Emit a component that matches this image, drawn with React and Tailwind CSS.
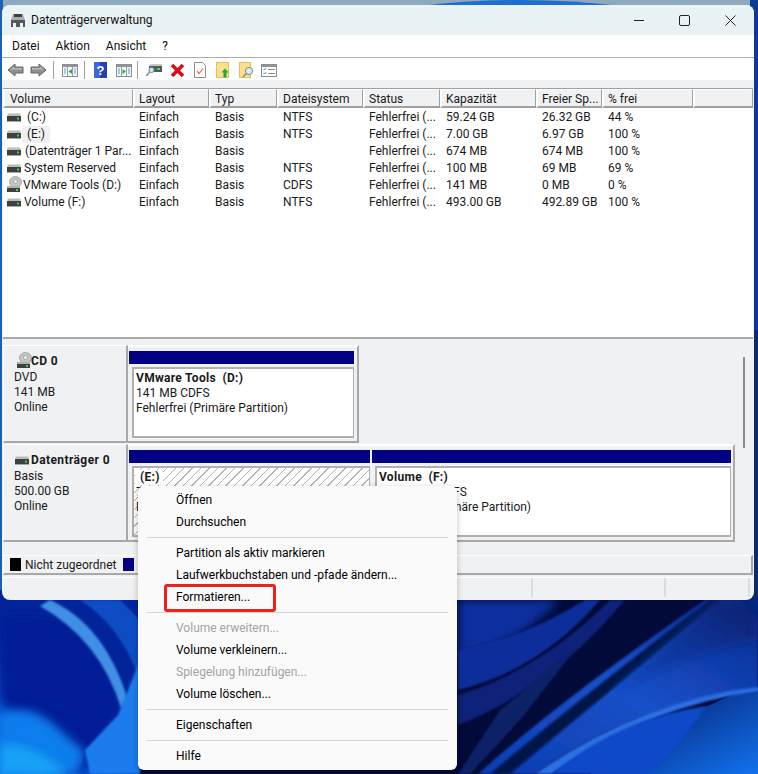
const volumes = [
  { name: '(C:)', pad: 'pl-[6px]', layout: 'Einfach', typ: 'Basis', fs: 'NTFS', status: 'Fehlerfrei (...', cap: '59.24 GB', free: '26.32 GB', pct: '44 %' },
  { name: '(E:)', pad: 'pl-[6px]', sel: true, layout: 'Einfach', typ: 'Basis', fs: 'NTFS', status: 'Fehlerfrei (...', cap: '7.00 GB', free: '6.97 GB', pct: '100 %' },
  { name: '(Datenträger 1 Par...', pad: 'pl-[4px]', layout: 'Einfach', typ: 'Basis', fs: '', status: 'Fehlerfrei (...', cap: '674 MB', free: '674 MB', pct: '100 %' },
  { name: 'System Reserved', pad: 'pl-[3px]', layout: 'Einfach', typ: 'Basis', fs: 'NTFS', status: 'Fehlerfrei (...', cap: '100 MB', free: '69 MB', pct: '69 %' },
  { name: 'VMware Tools (D:)', pad: 'pl-[3px]', cd: true, layout: 'Einfach', typ: 'Basis', fs: 'CDFS', status: 'Fehlerfrei (...', cap: '141 MB', free: '0 MB', pct: '0 %' },
  { name: 'Volume (F:)', pad: 'pl-[3px]', layout: 'Einfach', typ: 'Basis', fs: 'NTFS', status: 'Fehlerfrei (...', cap: '493.00 GB', free: '492.89 GB', pct: '100 %' },
];

const columns = ['Volume', 'Layout', 'Typ', 'Dateisystem', 'Status', 'Kapazität', 'Freier Sp...', '% frei', ''];
const gridCols = 'grid grid-cols-[130px_76px_68px_86px_77px_96px_66px_91px_1fr]';

const menu = [
  ['Öffnen', 'Durchsuchen'],
  ['Partition als aktiv markieren', 'Laufwerkbuchstaben und -pfade ändern...', 'Formatieren...'],
  ['Volume erweitern...', 'Volume verkleinern...', 'Spiegelung hinzufügen...', 'Volume löschen...'],
  ['Eigenschaften'],
  ['Hilfe'],
];
const disabled = ['Volume erweitern...', 'Spiegelung hinzufügen...'];

const Wallpaper = () => (
  <svg className="absolute inset-0" width="758" height="774" viewBox="0 0 758 774">
    <defs>
      <filter id="soft" x="-20%" y="-20%" width="140%" height="140%"><feGaussianBlur stdDeviation="5" /></filter>
      <filter id="soft2" x="-20%" y="-20%" width="140%" height="140%"><feGaussianBlur stdDeviation="1.2" /></filter>
      <radialGradient id="glow" cx="0.25" cy="1" r="0.75">
        <stop offset="0" stopColor="#17a0f5" />
        <stop offset="0.5" stopColor="#0a60dc" />
        <stop offset="1" stopColor="#02249a" />
      </radialGradient>
      <linearGradient id="band" x1="0" y1="1" x2="1" y2="0">
        <stop offset="0" stopColor="#0d3cb0" />
        <stop offset="0.5" stopColor="#1750c8" />
        <stop offset="1" stopColor="#0a2a90" />
      </linearGradient>
      <linearGradient id="band2" x1="0" y1="1" x2="1" y2="0">
        <stop offset="0" stopColor="#0d49c4" />
        <stop offset="1" stopColor="#062070" />
      </linearGradient>
      <linearGradient id="corner" x1="0" y1="0" x2="1" y2="1">
        <stop offset="0" stopColor="#020f5c" />
        <stop offset="1" stopColor="#1272ec" />
      </linearGradient>
    </defs>
    <rect width="758" height="774" fill="#010a38" />
    <rect width="758" height="12" fill="#8fa9bf" />
    <path d="M420 6 Q520 -6 622 6 L622 12 L420 12 Z" fill="#1c6ed0" />
    <rect x="0" y="0" width="3" height="600" fill="#1a5fb8" />
    <rect x="750" y="0" width="8" height="330" fill="#0d3a90" />
    <rect x="750" y="330" width="8" height="280" fill="#0a2a6e" />

    {/* bottom left swirl */}
    <rect x="0" y="590" width="140" height="184" fill="url(#glow)" />
    <path d="M0 618 Q70 605 105 660 Q130 700 115 725 L85 774 L60 774 L0 700 Z" fill="#021f96" filter="url(#soft)" />
    <path d="M0 715 Q30 700 60 730 L85 752 L78 774 L0 774 Z" fill="#0f7cec" filter="url(#soft)" />
    <path d="M0 745 Q30 740 70 774 L0 774 Z" fill="#19a2f7" filter="url(#soft)" />
    <path d="M50 600 Q105 625 128 700 L121 708 Q100 640 40 606 Z" fill="#3f8fe4" filter="url(#soft2)" />
    <path d="M80 600 Q120 625 140 680 L140 620 L120 600 Z" fill="#0c4ec4" filter="url(#soft2)" />
    <path d="M85 750 L118 715 L140 660 L140 774 L90 774 Z" fill="#1b7cee" filter="url(#soft2)" />

    {/* bottom right ribbons */}
    <path d="M458 600 L560 600 Q510 650 458 655 Z" fill="#0a2f9e" filter="url(#soft)" />
    <path d="M458 650 Q520 640 585 600 L600 600 Q540 670 458 690 Z" fill="#0b2f9a" filter="url(#soft2)" />
    <path d="M458 695 Q540 670 610 600 L625 600 Q550 690 458 725 Z" fill="#082478" filter="url(#soft2)" />
    <path d="M458 774 L500 710 L575 650 L520 720 L470 774 Z" fill="#0a2266" filter="url(#soft2)" />
    <path d="M478 774 Q560 700 705 600 L758 600 L758 690 Q640 700 535 774 Z" fill="url(#band)" filter="url(#soft2)" />
    <path d="M490 774 Q590 690 710 600 L722 600 Q610 690 510 774 Z" fill="#06134a" filter="url(#soft2)" />
    <path d="M715 600 L758 600 L758 640 Q700 650 610 695 Q660 650 715 600 Z" fill="url(#band2)" filter="url(#soft)" />
    <path d="M590 774 Q640 730 710 705 Q730 695 758 687 L758 774 Z" fill="url(#corner)" />
    <path d="M535 774 Q640 700 758 687 L758 691 Q650 706 552 774 Z" fill="#2b6fe4" filter="url(#soft2)" />
    <path d="M552 774 Q620 718 706 706 Q680 745 650 774 Z" fill="#0d48c8" filter="url(#soft2)" />
  </svg>
);

const DriveIcon = ({ className = '' }) => (
  <svg className={className} width="14" height="9" viewBox="0 0 14 9">
    <rect x="0.5" y="0.5" width="13" height="3" fill="#b9bcbc" />
    <rect x="0" y="3" width="14" height="5" fill="#3d4040" />
    <rect x="10" y="4.5" width="2" height="2" fill="#35d64a" />
    <rect x="0" y="8" width="14" height="1" fill="#a8a8a8" />
  </svg>
);

const CdIcon = ({ className = '' }) => (
  <svg className={className} width="16" height="17" viewBox="0 0 16 17">
    <ellipse cx="9.5" cy="6" rx="6" ry="5.5" fill="#c4c6c6" stroke="#909292" strokeWidth="0.7" />
    <circle cx="9.5" cy="5.5" r="2" fill="#eceeee" stroke="#8b8b8b" strokeWidth="0.6" />
    <rect x="1" y="10" width="13" height="2" fill="#b0b2b2" />
    <rect x="1" y="12" width="13" height="4" fill="#3d4040" />
    <rect x="10" y="13" width="2" height="2" fill="#35d64a" />
  </svg>
);

const ArrowIcon = ({ flip }) => (
  <svg width="17" height="14" viewBox="0 0 17 14" className={flip ? '-scale-x-100' : ''}>
    <path d="M1 7 L8 1 L8 4 L16 4 L16 10 L8 10 L8 13 Z" fill="#8f9191" stroke="#626464" strokeWidth="1" />
    <path d="M3 7 L7 3.6 L7 5 L15 5 L15 6.5 L5 6.5 Z" fill="#b8baba" />
  </svg>
);

const PaneIcon = ({ left }) => (
  <svg width="16" height="13" viewBox="0 0 16 13">
    <rect x="0.5" y="0.5" width="15" height="12" fill="#f4f5f5" stroke="#8b8f93" />
    <rect x="1" y="1" width="14" height="2" fill="#8f9498" />
    <path d="M5.5 3v9" stroke="#9aa0a5" />
    <path d="M10.5 3v9" stroke="#9aa0a5" />
    {left
      ? <path d="M10 5v5L6.5 7.5z" fill="#2fa84a" />
      : <path d="M6.5 5v5L10 7.5z" fill="#2fa84a" />}
    <path d="M2 5h2M2 7h2M2 9h2M12 5h2M12 7h2M12 9h2" stroke="#5b9bd8" />
  </svg>
);

const ToolSep = () => <div className="w-px h-[18px] bg-[#a0a0a0]" />;

const Toolbar = () => (
  <div className="h-[22px] shrink-0 bg-white flex items-center pl-[5px] pt-[2px]">
    <ArrowIcon />
    <div className="w-[6px]" />
    <ArrowIcon flip />
    <div className="w-[6px]" />
    <ToolSep />
    <div className="w-[8px]" />
    <PaneIcon left />
    <div className="w-[6px]" />
    <ToolSep />
    <div className="w-[9px]" />
    <svg width="13" height="16" viewBox="0 0 13 16">
      <rect width="13" height="16" fill="#2340b0" />
      <rect x="0" y="0" width="6" height="16" fill="#3d66d8" />
      <text x="6.5" y="12.5" textAnchor="middle" fontSize="13" fontWeight="700" fill="#fff" fontFamily="Liberation Sans">?</text>
    </svg>
    <div className="w-[9px]" />
    <PaneIcon />
    <div className="w-[5px]" />
    <ToolSep />
    <div className="w-[8px]" />
    <svg width="16" height="14" viewBox="0 0 16 14">
      <path d="M3 3h13v6H3z" fill="#55595b" />
      <path d="M3 3l2-2h11v2z" fill="#c6c9c9" />
      <rect x="11" y="5" width="3" height="2" fill="#3ddc55" />
      <circle cx="5.5" cy="7" r="2.6" fill="#cfe6f4" stroke="#6b87a0" />
      <path d="M3.5 9L0.5 13" stroke="#8e8e8e" strokeWidth="1.6" />
    </svg>
    <div className="w-[8px]" />
    <svg width="15" height="15" viewBox="0 0 15 15">
      <path d="M2 2L13 13M13 2L2 13" stroke="#d9101a" strokeWidth="3.6" />
    </svg>
    <div className="w-[9px]" />
    <svg width="12" height="16" viewBox="0 0 12 16">
      <path d="M0.5 0.5h8l3 3v12h-11z" fill="#fff" stroke="#8f8f8f" />
      <path d="M3 9l2 2.5 4-5" fill="none" stroke="#e8663a" strokeWidth="1.2" />
    </svg>
    <div className="w-[10px]" />
    <svg width="13" height="16" viewBox="0 0 13 16">
      <rect x="0.5" y="0.5" width="12" height="15" fill="#fbe08c" stroke="#e0c060" />
      <path d="M9 6.5l3.5 4h-2v5h-3v-5h-2z" fill="#21a83a" />
    </svg>
    <div className="w-[10px]" />
    <svg width="15" height="16" viewBox="0 0 15 16">
      <rect x="0.5" y="0.5" width="11" height="15" fill="#fbe08c" stroke="#e0c060" />
      <circle cx="10" cy="9" r="3.6" fill="#dcecf6" stroke="#6d8ba3" />
      <path d="M7.5 11.5L4 15" stroke="#8d8d8d" strokeWidth="1.6" />
    </svg>
    <div className="w-[7px]" />
    <svg width="16" height="13" viewBox="0 0 16 13">
      <rect x="0.5" y="0.5" width="15" height="12" fill="#fff" stroke="#8b8f93" />
      <rect x="1" y="1" width="14" height="2" fill="#8f9498" />
      <path d="M2.5 5l1 1 1.5-1.8M2.5 9l1 1 1.5-1.8" fill="none" stroke="#2f7fd8" />
      <path d="M7 5.5h7M7 9.5h7" stroke="#8a8a8a" />
    </svg>
  </div>
);

const VolumeList = () => (
  <div className="h-[251px] flex flex-col bg-white border-t border-[#a0a0a0] border-b-2 border-b-[#a8a8a8] mx-px shrink-0">
    <div className={`${gridCols} h-[19px] shrink-0 bg-[#f0f1f3]`}>
      {columns.map((col, i) => (
        <div key={i} className="border-l-2 border-t border-white border-r border-b-2 border-r-[#a0a0a0] border-b-[#a0a0a0] pl-[4px] first:pl-[5px] leading-[18px] overflow-hidden whitespace-nowrap">
          {col}
        </div>
      ))}
    </div>
    <div className="pt-px">
      {volumes.map((v) => (
        <div key={v.name} className={`${gridCols} h-[17px] leading-[17px]`}>
          <div className="flex items-center pl-[4px] whitespace-nowrap">
            {v.cd ? <CdIcon className="shrink-0 -mt-[3px] -ml-[1px] mr-[-2px]" /> : <DriveIcon className="shrink-0" />}
            {v.sel
              ? <span className="ml-[1px] pl-[5px] w-[28px] bg-[#f0f0f0]">{v.name}</span>
              : <span className={v.pad}>{v.name}</span>}
          </div>
          <div className="pl-[6px]">{v.layout}</div>
          <div className="pl-[6px]">{v.typ}</div>
          <div className="pl-[6px]">{v.fs}</div>
          <div className="pl-[6px]">{v.status}</div>
          <div className="pl-[6px]">{v.cap}</div>
          <div className="pl-[6px]">{v.free}</div>
          <div className="pl-[6px]">{v.pct}</div>
          <div />
        </div>
      ))}
    </div>
  </div>
);

const DiskLabel = ({ icon, title, lines }) => (
  <div className="w-[125px] h-[98px] shrink-0 border-t border-l border-white border-r-2 border-b-2 border-r-[#a8a8a8] border-b-[#a8a8a8] pl-[10px] leading-[15px]">
    <div className="flex items-end font-bold tracking-[0.4px] h-[24px] pb-[1px]">
      {icon}
      <span>{title}</span>
    </div>
    {lines.map((l) => <div key={l}>{l}</div>)}
  </div>
);

const Partition = ({ width, title, lines, hatched }) => (
  <div className="shrink-0" style={{ width }}>
    <div className="h-[13px] bg-[#000080]" />
    <div className={`mt-[3px] ml-[3px] h-[71px] border-2 border-[#b0b0b0] border-r border-b-2 pl-[1px] pt-[2px] leading-[15px] ${hatched ? 'bg-[repeating-linear-gradient(135deg,#ffffff_0px,#ffffff_5px,#b4b4b4_5px,#b4b4b4_6px)]' : 'bg-white'}`}>
      <div className={`font-bold tracking-[0.3px] h-[15px] whitespace-pre ${hatched ? 'w-fit bg-white pr-[3px] pl-[5px]' : 'pl-[1px]'}`}>{title}</div>
      {lines.map((l) => <div key={l} className="pl-[1px] whitespace-nowrap">{l}</div>)}
    </div>
  </div>
);

const DiskPane = () => (
  <div className="flex h-[216px] shrink-0 mx-px">
    <div className="w-[732px] pt-[6px] flex flex-col gap-px">
      <div className="flex">
        <DiskLabel
          icon={<CdIcon className="mr-[-1px] ml-[2px]" />}
          title="CD 0"
          lines={['DVD', '141 MB', 'Online']}
        />
        <div className="w-[231px] h-[98px] border-r-2 border-b-2 border-[#a8a8a8] border-t-2 border-t-white pt-[4px] pl-px">
          <Partition width="225px" title="VMware Tools  (D:)" lines={['141 MB CDFS', 'Fehlerfrei (Primäre Partition)']} />
        </div>
      </div>
      <div className="flex">
        <DiskLabel
          icon={<DriveIcon className="ml-[1px] mr-[2px] mb-[3px]" />}
          title="Datenträger 0"
          lines={['Basis', '500.00 GB', 'Online']}
        />
        <div className="w-[607px] h-[98px] border-r-2 border-b-2 border-[#a8a8a8] border-t-2 border-t-white pt-[4px] pl-px flex gap-[2px]">
          <Partition width="241px" title="(E:)" hatched lines={['7.00 GB NTFS', 'Fehlerfrei (Primäre Partition)']} />
          <Partition width="359px" title="Volume  (F:)" lines={['493.00 GB NTFS', 'Fehlerfrei (Primäre Partition)']} />
        </div>
      </div>
    </div>
    {/* scrollbar */}
    <div className="w-[17px] flex justify-center pt-[18px] pl-[1px]">
      <div className="w-[2px] h-[91px] bg-[#8a8a8a]" />
    </div>
  </div>
);

const Legend = () => (
  <div className="h-[20px] shrink-0 mx-px border-t border-l border-white border-r-2 border-b-2 border-r-[#a8a8a8] border-b-[#a8a8a8] flex items-center pl-[6px]">
    <div className="w-[11px] h-[13px] bg-black" />
    <span className="ml-[4px] w-[98px]">Nicht zugeordnet</span>
    <div className="w-[11px] h-[13px] bg-[#000080]" />
    <span className="ml-[4px]">Primäre Partition</span>
  </div>
);

const StatusBar = () => (
  <div className="h-[20px] mt-[2px] border-t border-white flex shrink-0 mx-px">
    <div className="w-[530px] border-r-2 border-[#dcdcdc]" />
    <div className="w-[133px] border-r-2 border-[#dcdcdc]" />
    <div className="w-[84px] border-r-2 border-[#dcdcdc]" />
  </div>
);

const ContextMenu = () => (
  <div className="absolute left-[138px] top-[486px] w-[319px] h-[284px] bg-[#fafafa] rounded-md shadow-[0_2px_6px_rgba(0,0,0,0.25)] py-[3px] text-black">
    {menu.map((group, i) => (
      <div key={i}>
        {i > 0 && (
          <div className="h-[9px] flex items-center px-[9px]">
            <div className="h-px w-full bg-[#d4d4d4]" />
          </div>
        )}
        {group.map((item) => (
          <div key={item} className={`h-[22px] leading-[22px] pl-[38px] ${disabled.includes(item) ? 'text-[#a3a3a3]' : ''}`}>
            {item}
          </div>
        ))}
      </div>
    ))}
  </div>
);

const App = () => (
  <div className="relative w-[758px] h-[774px] overflow-hidden font-['Roboto',sans-serif] text-[12px] text-[#1a1a1a]">
    <Wallpaper />
    <div className="absolute left-[2px] top-[5px] w-[752px] h-[595px] rounded-lg overflow-hidden bg-[#f0f1f3] flex flex-col">
      {/* title bar */}
      <div className="h-[30px] shrink-0 bg-[#e9f2f4] flex items-center">
        <svg className="ml-[8px]" width="16" height="15" viewBox="0 0 16 15">
          <path d="M3 1h10l2 6H1z" fill="#a9adad" />
          <rect x="4" y="1" width="8" height="3" fill="#3d4040" />
          <rect x="1" y="7" width="14" height="7" fill="#555959" />
          <rect x="3" y="10" width="3" height="4" fill="#eef2f2" />
          <rect x="10" y="10" width="3" height="4" fill="#eef2f2" />
        </svg>
        <span className="ml-[5px] text-[#111]">Datenträgerverwaltung</span>
        <div className="ml-auto flex items-center mr-[18px] gap-[35px]">
          <svg width="10" height="11" viewBox="0 0 10 11"><path d="M0 5.5h10" stroke="#222" /></svg>
          <svg width="11" height="11" viewBox="0 0 11 11"><rect x="0.5" y="0.5" width="10" height="10" rx="1.5" fill="none" stroke="#222" /></svg>
          <svg width="11" height="11" viewBox="0 0 11 11"><path d="M0.5 0.5l10 10M10.5 0.5l-10 10" stroke="#222" /></svg>
        </div>
      </div>
      {/* menu bar */}
      <div className="h-[23px] shrink-0 bg-white border-b border-[#ababab] flex items-center pl-[10px] gap-[16px] text-[#111]">
        <span>Datei</span>
        <span>Aktion</span>
        <span>Ansicht</span>
        <span>?</span>
      </div>
      <Toolbar />
      <div className="h-[8px] shrink-0 bg-[#f0f1f3]" />
      <VolumeList />
      <DiskPane />
      <Legend />
      <StatusBar />
    </div>
    <ContextMenu />
    {/* red highlight */}
    <div className="absolute left-[164px] top-[584px] w-[112px] h-[28px] border-[3px] border-[#f0201a] rounded-[3px]" />
  </div>
);

export default App;
